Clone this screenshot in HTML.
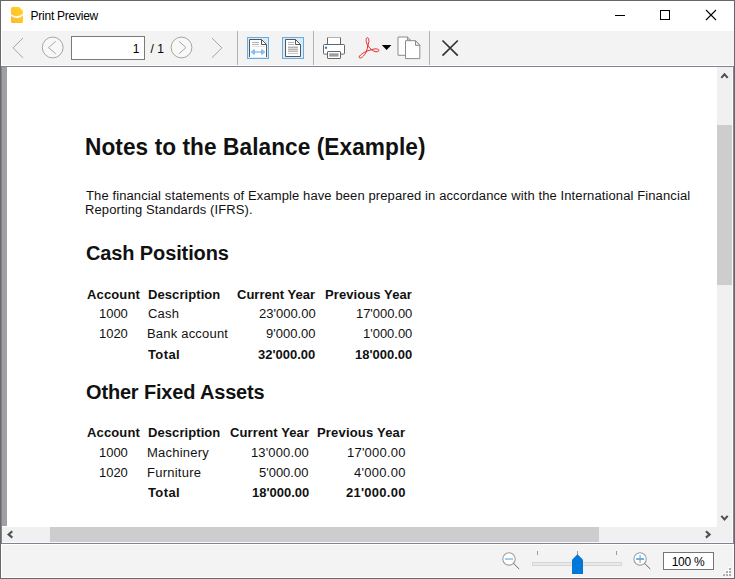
<!DOCTYPE html>
<html><head><meta charset="utf-8"><title>Print Preview</title>
<style>
html,body{margin:0;padding:0;}
body{width:735px;height:579px;position:relative;overflow:hidden;background:#fff;font-family:"Liberation Sans",sans-serif;color:#000;}
#win{position:absolute;left:0;top:0;width:735px;height:579px;overflow:hidden;background:#686868;}
#win>div,#win>svg{position:absolute;}
#titlebar{left:1px;top:1px;width:733px;height:577px;background:#fff;}
#title{left:30.6px;top:8.5px;font-size:12px;line-height:15px;letter-spacing:-0.25px;color:#000;white-space:nowrap;}
#toolbar{left:2px;top:31px;width:732px;height:34px;background:#f3f3f3;}
#frame{left:1px;top:66px;width:733px;height:478px;background:#7e8490;}
#viewport{left:2px;top:67px;width:715px;height:458.5px;background:#a0a0a4;overflow:hidden;}
#vpw{left:2px;top:525.5px;width:715px;height:1.5px;background:#fff;}
#sheet{position:absolute;left:5px;top:0;width:720px;height:470px;background:#fff;}
#doc div{color:#111;position:absolute;white-space:nowrap;line-height:1;transform-origin:0 0;}
#vscroll{left:717px;top:67px;width:15px;height:460px;background:#f0f0f0;border-right:1px solid #fafafa;}
#vthumb{left:717px;top:125px;width:15px;height:160px;background:#cdcdcd;}
#hscroll{left:2px;top:527px;width:731px;height:15px;background:#f0f0f0;border-bottom:1px solid #fafafa;}
#hthumb{left:50px;top:527px;width:549px;height:15px;background:#cdcdcd;}
#corner{left:732px;top:527px;width:1px;height:16px;background:#fafafa;}
#status{left:2px;top:545px;width:731px;height:32px;background:#f3f3f3;}
#pgin{left:71px;top:36px;width:72px;height:22px;border:1px solid #7a7a7a;background:#fff;}
#pgnum{left:100px;top:42px;width:39.5px;text-align:right;font-size:12px;line-height:15px;}
#pgtot{left:150.5px;top:42px;font-size:12px;line-height:15px;white-space:nowrap;}
.tbtn{width:20px;height:20px;border:1px solid #66ade5;background:#d9ebf9;top:37px;}
.vsep{top:31px;width:1px;height:34px;background:#b4b4b4;}
#zoombox{left:663px;top:552px;width:49px;height:16px;border:1px solid #757575;background:#fff;}
#zoomtxt{left:663.5px;top:554.5px;width:49px;text-align:center;letter-spacing:-0.3px;font-size:12px;line-height:15px;white-space:nowrap;}
#icons{left:0;top:0;}
</style></head>
<body>
<div id="win">
<div id="titlebar"></div>
<div id="title">Print Preview</div>
<div id="toolbar"></div>
<div id="frame"></div>
<div id="viewport"><div id="sheet"><div id="doc">
<div style="left:78.23px;top:69.14px;font-size:23.46px;letter-spacing:0.065px;transform:scaleX(0.9662);font-weight:bold;">Notes to the Balance (Example)</div>
<div style="left:78.80px;top:121.78px;font-size:13.26px;letter-spacing:0.115px;transform:scaleX(0.9804);">The financial statements of Example have been prepared in accordance with the International Financial</div>
<div style="left:78.32px;top:135.78px;font-size:13.26px;letter-spacing:0.117px;transform:scaleX(0.9804);">Reporting Standards (IFRS).</div>
<div style="left:78.90px;top:176.48px;font-size:20.7px;letter-spacing:-0.119px;transform:scaleX(0.9662);font-weight:bold;">Cash Positions</div>
<div style="left:79.10px;top:315.48px;font-size:20.7px;letter-spacing:-0.170px;transform:scaleX(0.9662);font-weight:bold;">Other Fixed Assets</div>
<div style="left:79.90px;top:220.78px;font-size:13.26px;letter-spacing:0.147px;transform:scaleX(0.9804);font-weight:bold;">Account</div>
<div style="left:140.90px;top:220.78px;font-size:13.26px;letter-spacing:0.085px;transform:scaleX(0.9804);font-weight:bold;">Description</div>
<div style="left:230.20px;top:220.78px;font-size:13.26px;letter-spacing:0.026px;transform:scaleX(0.9804);font-weight:bold;">Current Year</div>
<div style="left:318.40px;top:220.78px;font-size:13.26px;letter-spacing:0.095px;transform:scaleX(0.9804);font-weight:bold;">Previous Year</div>
<div style="left:92.02px;top:239.78px;font-size:13.26px;letter-spacing:-0.019px;transform:scaleX(0.9804);">1000</div>
<div style="left:140.90px;top:239.78px;font-size:13.26px;letter-spacing:0.216px;transform:scaleX(0.9804);">Cash</div>
<div style="left:252.00px;top:239.78px;font-size:13.26px;letter-spacing:0.000px;transform:scaleX(0.9804);">23'000.00</div>
<div style="left:348.72px;top:239.78px;font-size:13.26px;letter-spacing:-0.041px;transform:scaleX(0.9804);">17'000.00</div>
<div style="left:92.02px;top:259.78px;font-size:13.26px;letter-spacing:-0.019px;transform:scaleX(0.9804);">1020</div>
<div style="left:139.92px;top:259.78px;font-size:13.26px;letter-spacing:0.209px;transform:scaleX(0.9804);">Bank account</div>
<div style="left:259.20px;top:259.78px;font-size:13.26px;letter-spacing:0.004px;transform:scaleX(0.9804);">9'000.00</div>
<div style="left:355.72px;top:259.78px;font-size:13.26px;letter-spacing:-0.014px;transform:scaleX(0.9804);">1'000.00</div>
<div style="left:141.20px;top:280.78px;font-size:13.26px;letter-spacing:0.409px;transform:scaleX(0.9804);font-weight:bold;">Total</div>
<div style="left:251.40px;top:280.78px;font-size:13.26px;letter-spacing:-0.001px;transform:scaleX(0.9804);font-weight:bold;">32'000.00</div>
<div style="left:347.90px;top:280.78px;font-size:13.26px;letter-spacing:-0.014px;transform:scaleX(0.9804);font-weight:bold;">18'000.00</div>
<div style="left:79.90px;top:358.78px;font-size:13.26px;letter-spacing:0.147px;transform:scaleX(0.9804);font-weight:bold;">Account</div>
<div style="left:140.90px;top:358.78px;font-size:13.26px;letter-spacing:0.085px;transform:scaleX(0.9804);font-weight:bold;">Description</div>
<div style="left:222.50px;top:358.78px;font-size:13.26px;letter-spacing:0.119px;transform:scaleX(0.9804);font-weight:bold;">Current Year</div>
<div style="left:309.90px;top:358.78px;font-size:13.26px;letter-spacing:0.197px;transform:scaleX(0.9804);font-weight:bold;">Previous Year</div>
<div style="left:92.02px;top:378.78px;font-size:13.26px;letter-spacing:-0.019px;transform:scaleX(0.9804);">1000</div>
<div style="left:139.92px;top:378.78px;font-size:13.26px;letter-spacing:0.228px;transform:scaleX(0.9804);">Machinery</div>
<div style="left:244.12px;top:378.78px;font-size:13.26px;letter-spacing:0.138px;transform:scaleX(0.9804);">13'000.00</div>
<div style="left:339.92px;top:378.78px;font-size:13.26px;letter-spacing:0.227px;transform:scaleX(0.9804);">17'000.00</div>
<div style="left:92.02px;top:398.78px;font-size:13.26px;letter-spacing:-0.019px;transform:scaleX(0.9804);">1020</div>
<div style="left:139.92px;top:398.78px;font-size:13.26px;letter-spacing:0.250px;transform:scaleX(0.9804);">Furniture</div>
<div style="left:252.30px;top:398.78px;font-size:13.26px;letter-spacing:-0.011px;transform:scaleX(0.9804);">5'000.00</div>
<div style="left:346.90px;top:398.78px;font-size:13.26px;letter-spacing:0.295px;transform:scaleX(0.9804);">4'000.00</div>
<div style="left:141.20px;top:418.78px;font-size:13.26px;letter-spacing:0.409px;transform:scaleX(0.9804);font-weight:bold;">Total</div>
<div style="left:244.50px;top:418.78px;font-size:13.26px;letter-spacing:-0.014px;transform:scaleX(0.9804);font-weight:bold;">18'000.00</div>
<div style="left:339.00px;top:418.78px;font-size:13.26px;letter-spacing:0.267px;transform:scaleX(0.9804);font-weight:bold;">21'000.00</div>
</div></div></div>
<div id="vpw"></div>
<div id="vscroll"></div>
<div id="vthumb"></div>
<div id="hscroll"></div>
<div id="hthumb"></div>
<div id="corner"></div>
<div id="status"></div>
<div id="pgin"></div>
<div id="pgnum">1</div>
<div id="pgtot">/ 1</div>
<div class="vsep" style="left:237px"></div>
<div class="vsep" style="left:313px"></div>
<div class="vsep" style="left:429px"></div>
<div class="tbtn" style="left:247px"></div>
<div class="tbtn" style="left:282px"></div>
<div id="zoombox"></div>
<div id="zoomtxt">100 %</div>
<svg id="icons" width="735" height="579" viewBox="0 0 735 579">
<defs>
<linearGradient id="yg" x1="1" y1="0" x2="0" y2="1"><stop offset="0" stop-color="#ffd51e"/><stop offset="1" stop-color="#ffb734"/></linearGradient>
</defs>
<!-- app icon -->
<path d="M12.5 7 H19 L23 11 V21.5 Q23 23 21.5 23 H12.5 Q11 23 11 21.5 V8.5 Q11 7 12.5 7 Z" fill="url(#yg)"/>
<path d="M11 14.0 C13.5 16.9 20.5 16.9 23 13.6 V15 C20.5 18.8 13.5 18.8 11 15.5 Z" fill="#fff"/>
<!-- window controls -->
<g stroke="#000" stroke-width="1" fill="none" shape-rendering="crispEdges">
<path d="M615 15.5 H625"/>
<rect x="660.5" y="10.5" width="9" height="9"/>
</g>
<path d="M706 10 L716 20 M716 10 L706 20" stroke="#000" stroke-width="1.1" fill="none"/>
<!-- nav -->
<g stroke="#9c9c9c" stroke-width="0.9" fill="none">
<path d="M23 38 L13.1 47.9 L23 57.8"/>
<circle cx="52.7" cy="47.5" r="10.4" fill="#f8f8f8"/>
<path d="M55.8 41.3 L48.5 47.6 L55.8 53.9"/>
<circle cx="181.5" cy="47.5" r="10.4" fill="#f8f8f8"/>
<path d="M178.9 41.3 L186 47.6 L178.9 53.9"/>
<path d="M211.9 38 L221.9 47.9 L211.9 57.8"/>
</g>
<!-- fit width icon -->
<path d="M249.5 57 V39.5 H261.5 L266.5 44.5 V57" fill="#fdfdfd" stroke="#4d4d4d" stroke-width="0.95"/>
<path d="M261.5 39.5 V44.5 H266.5" fill="none" stroke="#4d4d4d" stroke-width="0.95"/>
<g stroke="#b2b2b2" stroke-width="1" shape-rendering="crispEdges"><path d="M252 42.5 H259 M252 44.5 H259"/></g>
<path d="M252 46.5 H265" stroke="#e2e2e2" stroke-width="1" shape-rendering="crispEdges"/>
<path d="M253 52 H263" stroke="#68adea" stroke-width="1.1"/>
<path d="M251.2 52 L254.3 49.6 V54.4 Z M264.8 52 L261.7 49.6 V54.4 Z" fill="#9ccbf3" stroke="#4f9fe0" stroke-width="0.7"/>
<!-- fit page icon -->
<path d="M285.5 39.5 H295.5 L300.5 44.5 V56.5 H285.5 Z" fill="#fdfdfd" stroke="#4d4d4d" stroke-width="0.95"/>
<path d="M295.5 39.5 V44.5 H300.5" fill="none" stroke="#4d4d4d" stroke-width="0.95"/>
<g stroke="#b4b4b4" stroke-width="1" shape-rendering="crispEdges"><path d="M288 42.5 H294 M288 44.5 H294 M288 47.5 H298 M288 49.5 H298 M288 51.5 H298"/></g>
<g stroke="#dcdcdc" stroke-width="1" shape-rendering="crispEdges"><path d="M288 46.5 H298 M288 48.5 H298 M288 50.5 H298"/></g><g stroke="#c6c6c6" stroke-width="1" shape-rendering="crispEdges"><path d="M288 53.5 H298"/></g>
<!-- printer -->
<g stroke="#666" stroke-width="1" fill="#fff">
<rect x="327.5" y="37.5" width="13" height="7" rx="0.5"/>
<rect x="323.5" y="44.5" width="21" height="9.6" rx="0.8"/>
<rect x="327.5" y="51.5" width="13" height="7" rx="0.5"/>
</g>
<path d="M328 37.5 H340" stroke="#b0b0b0" stroke-width="1"/>
<rect x="329.2" y="53.3" width="9.3" height="3.3" fill="#9c9c9c"/>
<circle cx="326" cy="47.7" r="1.2" fill="#1e8be0"/>
<!-- pdf -->
<g fill="none" stroke="#e6282c" stroke-width="1.0" stroke-linejoin="round">
<path d="M367.8 45.3 C365.6 42.2 365.7 37.6 367.4 37.6 C369.1 37.6 369.4 42.2 367.8 45.3 Z"/>
<path d="M367.8 45.3 C368.8 47.2 370.2 48.7 371.9 49.8 C370.2 50 368 50.6 366.4 51.4 C367.2 49.6 367.7 47.4 367.8 45.3 Z"/>
<path d="M371.9 49.8 C374 48.4 379 48.6 378.9 50.5 C378.8 52.4 374.3 52.2 371.9 49.8 Z"/>
<path d="M366.4 51.4 C364 52.4 358.4 55.6 359.3 57.6 C360.4 59.4 364.8 55.6 366.4 51.4 Z"/>
</g>
<path d="M381.8 45 H391.4 L386.6 50 Z" fill="#000"/>
<!-- copy -->
<path d="M398 37 H407.4 L410.5 40 V55.3 H398 Z" fill="#fff" stroke="#8c8c8c" stroke-width="1"/>
<path d="M407.4 37 V40 H410.5" fill="none" stroke="#8c8c8c" stroke-width="1"/>
<path d="M405.5 40.7 H415.5 L419.8 45.4 V58.6 H405.5 Z" fill="#fff" stroke="#8c8c8c" stroke-width="1"/>
<path d="M415.5 40.7 V45.4 H419.8 Z" fill="#f4f4f4" stroke="#8c8c8c" stroke-width="1"/>
<!-- close -->
<path d="M442.5 40.5 L457.8 55.6 M457.8 40.5 L442.5 55.6" stroke="#333" stroke-width="1.7" fill="none"/>
<!-- scroll arrows -->
<g fill="none" stroke="#505050" stroke-width="2.1">
<path d="M721.3 77.9 L724.5 74.3 L727.7 77.9"/>
<path d="M721.3 515.9 L724.5 519.5 L727.7 515.9"/>
<path d="M12.3 531.2 L8.6 534.4 L12.3 537.6"/>
<path d="M705.9 531.2 L709.6 534.4 L705.9 537.6"/>
</g>
<!-- zoom out -->
<circle cx="509" cy="558.9" r="6.2" fill="#fff" stroke="#9e9e9e" stroke-width="1.1"/>
<path d="M513.5 563.4 L519.2 569" stroke="#555" stroke-width="0.9"/>
<path d="M505 559 H513" stroke="#9ccaec" stroke-width="1.8"/>
<!-- zoom in -->
<circle cx="640.1" cy="558.9" r="6.2" fill="#fff" stroke="#9e9e9e" stroke-width="1.1"/>
<path d="M644.6 563.4 L650.3 569" stroke="#555" stroke-width="0.9"/>
<path d="M640.1 555 V563" stroke="#9ccaec" stroke-width="1.8"/><path d="M636.1 559 H644.1" stroke="#62abe2" stroke-width="1.8"/>
<!-- slider -->
<g stroke="#a59a88" stroke-width="1" shape-rendering="crispEdges"><path d="M537.5 551 V555 M577.5 551 V555 M616.5 551 V555"/></g>
<rect x="532.5" y="562.5" width="89" height="3" fill="#e7eaea" stroke="#d6d6d6" stroke-width="1"/>
<path d="M572 574 V559.8 L577.5 554.3 L583 559.8 V574 Z" fill="#0078d7"/>
<!-- size grip -->
<g fill="#ffffff" shape-rendering="crispEdges">
<rect x="728" y="567" width="2" height="2"/>
<rect x="725" y="570" width="2" height="2"/><rect x="728" y="570" width="2" height="2"/>
<rect x="722" y="573" width="2" height="2"/><rect x="725" y="573" width="2" height="2"/><rect x="728" y="573" width="2" height="2"/>
</g>
<g fill="#acacac" shape-rendering="crispEdges">
<rect x="729" y="568" width="2" height="2"/>
<rect x="726" y="571" width="2" height="2"/><rect x="729" y="571" width="2" height="2"/>
<rect x="723" y="574" width="2" height="2"/><rect x="726" y="574" width="2" height="2"/><rect x="729" y="574" width="2" height="2"/>
</g>

</svg>
</div>
</body></html>
